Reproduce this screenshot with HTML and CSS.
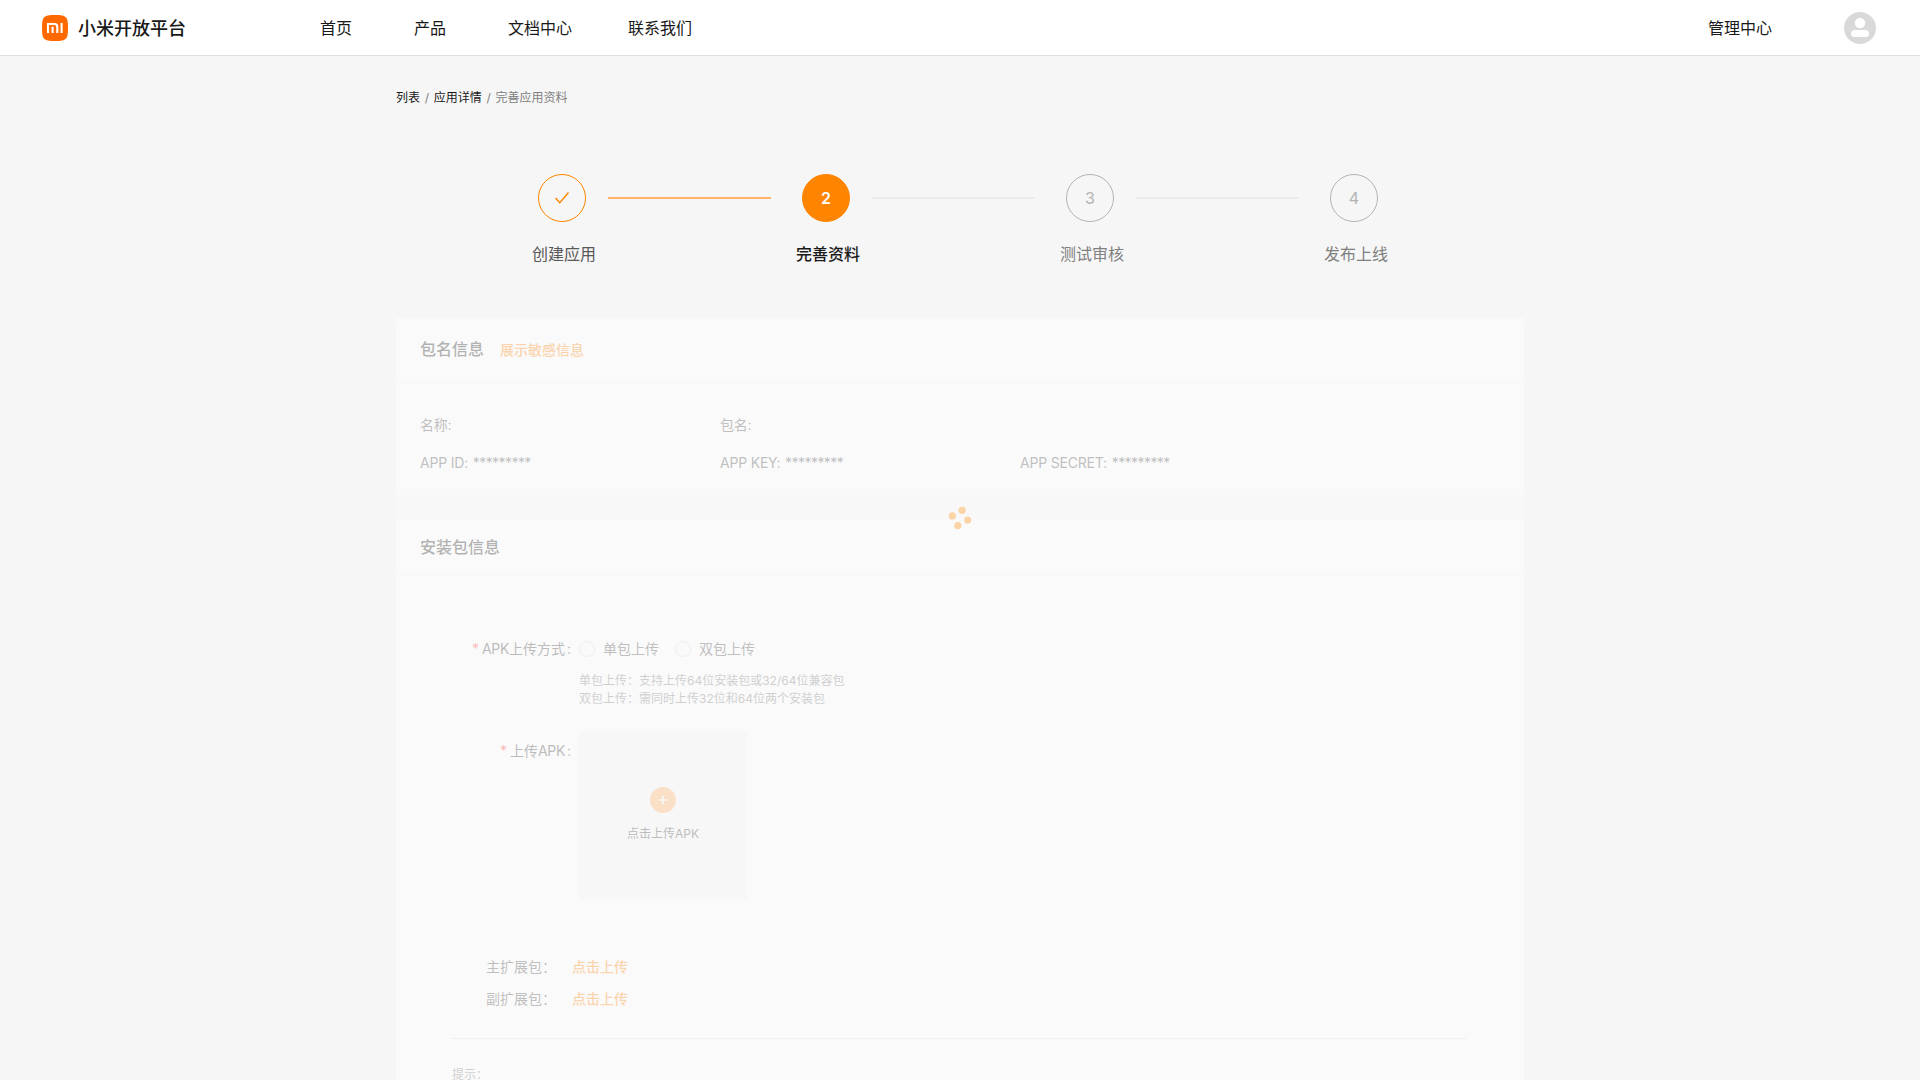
FILE: index.html
```html
<!DOCTYPE html>
<html lang="zh-CN">
<head>
<meta charset="utf-8">
<title>小米开放平台</title>
<link rel="stylesheet" href="styles.css">
</head>
<body>
<header class="header">
  <a class="brand">
    <svg class="brand-logo" viewBox="0 0 26 26"><path fill="#ff6900" d="M13 0C19 0 22 .6 23.8 2.3 25.500 4 26 7 26 13s-.5 9-2.200 10.700C22 25.400 19 26 13 26S4 25.400 2.200 23.700C.5 22 0 19 0 13S.5 4 2.200 2.300C4 .6 7 0 13 0z"/><path fill="none" stroke="#fff" stroke-width="2.100" d="M6 18V9h6.500c1.900 0 2.800.9 2.800 2.800V18M10.600 11.800V18M19.600 8v10"/></svg>
    <span class="brand-name">小米开放平台</span>
  </a>
  <nav class="nav"><a>首页</a><a>产品</a><a>文档中心</a><a>联系我们</a></nav>
  <a class="console">管理中心</a>
  <svg class="avatar" viewBox="0 0 32 32"><circle cx="16" cy="16" r="16" fill="#d9d9d9"/><circle cx="16" cy="11" r="5.200" fill="#fff"/><rect x="7" y="18" width="18" height="7" rx="3.500" fill="#fff"/></svg>
</header>
<main class="page">
  <div class="breadcrumb"><a>列表</a><i>/</i><a>应用详情</a><i>/</i><span>完善应用资料</span></div>
  <div class="steps">
    <div class="step done"><div class="dot"><svg width="16" height="14" viewBox="0 0 16 14"><path d="M1.500 7l4.300 4.800L14.500 1.500" fill="none" stroke="#ff8400" stroke-width="1.400"/></svg></div><div class="label">创建应用</div></div>
    <div class="line active"></div>
    <div class="step current"><div class="dot">2</div><div class="label">完善资料</div></div>
    <div class="line"></div>
    <div class="step"><div class="dot">3</div><div class="label">测试审核</div></div>
    <div class="line"></div>
    <div class="step"><div class="dot">4</div><div class="label">发布上线</div></div>
  </div>
  <div class="loading">
    <div class="content">
      <section class="card package">
        <div class="card-head"><h2>包名信息</h2><a class="link">展示敏感信息</a></div>
        <div class="info"><span>名称:</span><span>包名:</span><span></span><span>APP ID: <b>*********</b></span><span>APP KEY: <b>*********</b></span><span>APP SECRET: <b>*********</b></span></div>
      </section>
      <section class="card install">
        <div class="card-head"><h2>安装包信息</h2></div>
        <div class="field">
          <div class="field-label"><em>*</em><span class="latin">APK</span>上传方式<u>:</u></div>
          <div class="radios"><label><span class="radio"></span>单包上传</label><label><span class="radio"></span>双包上传</label></div>
        </div>
        <div class="help">单包上传：支持上传64位安装包或32/64位兼容包<br>双包上传：需同时上传32位和64位两个安装包</div>
        <div class="field upload-field">
          <div class="field-label"><em>*</em>上传<span class="latin">APK</span><u>:</u></div>
          <div class="upload"><svg width="26" height="26" viewBox="0 0 26 26"><circle cx="13" cy="13" r="13" fill="#ff8400" fill-opacity=".65"/><path d="M13 9v8M9 13h8" stroke="#fff" stroke-width="1.600"/></svg><span>点击上传APK</span></div>
        </div>
        <div class="extras"><div><span>主扩展包：</span><a class="link">点击上传</a></div><div><span>副扩展包：</span><a class="link">点击上传</a></div></div>
        <div class="tips">提示：</div>
      </section>
    </div>
    <svg class="spinner" viewBox="0 0 24 24" fill="#fbd4a6"><circle cx="14.100" cy="4.300" r="3.600"/><circle cx="4.300" cy="9.900" r="3.600"/><circle cx="19.700" cy="14.100" r="3.600"/><circle cx="9.900" cy="19.700" r="3.600"/></svg>
  </div>
</main>
</body>
</html>
```
FILE: styles.css
```css
* { box-sizing: border-box; }
body { margin: 0; height: 1080px; overflow: hidden; background: #f6f6f6; color: #333; font: 14px/22px Inter, "Noto Sans CJK SC", sans-serif; }
.header { height: 56px; background: #fff; border-bottom: 1px solid #e0e0e0; display: flex; align-items: center; color: #191919; font-size: 16px; padding: 0 44px 0 42px; }
.brand { display: flex; align-items: center; width: 278px; }
.brand-logo { width: 26px; height: 26px; margin-right: 10px; }
.brand-name { font-size: 18px; font-weight: 500; padding-top: 2px; }
.nav { display: flex; flex: 1; }
.nav a { margin-right: 56px; }
.nav a:nth-child(2) { margin-left: 6px; margin-right: 62px; }
.console { margin-right: 72px; }
.avatar { width: 32px; height: 32px; }
.page { width: 1128px; margin: 0 auto; padding-top: 31px; }
.breadcrumb { font-size: 12px; color: #808080; height: 22px; }
.breadcrumb a { color: #191919; }
.breadcrumb i { font-style: normal; margin: 0 4.700px; }
.steps { display: flex; padding: 65px 132px 0 134px; height: 209px; }
.step { width: 66px; text-align: center; flex: none; }
.dot { width: 48px; height: 48px; border: 1px solid #b3b3b3; border-radius: 50%; color: #b3b3b3; font-size: 16px; margin: 0 auto 20px 8px; display: flex; align-items: center; justify-content: center; }
.label { font-size: 16px; color: #808080; line-height: 24px; white-space: nowrap; padding-left: 2px; }
.done .dot { border-color: #ff8400; }
.done .label { color: #595959; }
.current .dot { background: #ff8400; border-color: #ff8400; color: #fff; font-weight: 600; }
.current .label { color: #1a1a1a; font-weight: 500; }
.line { width: 163px; height: 2px; margin: 23px 23px 0 12px; background: #ececec; flex: none; }
.line.active { background: #ffb566; }
.loading { position: relative; background: #f8f8f8; }
.content { opacity: .3; }
.card { background: #fff; }
.package { height: 177px; margin-bottom: 24px; border-radius: 4px 4px 0 0; }
.install { height: 561px; }
.card-head { display: flex; align-items: center; padding: 0 24px; border-bottom: 1px solid #f6f6f6; }
.package .card-head { height: 65px; padding-bottom: 2px; }
.install .card-head { height: 57px; }
.card-head h2 { font-size: 16px; font-weight: 500; margin: 0 16px 0 0; color: #111; }
.link { color: #ff8400; font-weight: 500; }
.card-head .link { padding-top: 1px; }
.info { display: grid; grid-template-columns: 300px 300px 300px; row-gap: 16px; padding: 31px 24px 0; color: #404040; }
.info span { letter-spacing: -.2px; }
.info b { font-weight: 400; margin-left: 1px; letter-spacing: -.56px; }
.field { display: flex; }
.install > .field { padding-top: 62px; }
.field-label { width: 183px; text-align: right; padding-right: 8px; flex: none; }
.field-label em { color: #ff2d2d; font-style: normal; margin-right: 3px; }
.field-label u { text-decoration: none; margin-left: 2px; }
.latin { letter-spacing: -.35px; }
.radios { display: flex; gap: 16px; color: #404040; }
.radios label { display: flex; align-items: center; }
.radio { width: 16px; height: 16px; border: 1px solid #d9d9d9; border-radius: 50%; margin-right: 8px; }
.help { padding: 12px 0 0 183px; font-size: 12px; line-height: 18px; color: #737373; }
.install > .upload-field { padding-top: 23px; }
.upload-field .field-label { padding-top: 9px; }
.upload { width: 168px; height: 168px; background: #f7f7f7; display: flex; flex-direction: column; align-items: center; padding-top: 56px; font-size: 12px; }
.upload span { margin-top: 10px; }
.extras { padding: 52px 0 23px 90px; color: #404040; }
.extras div { display: flex; height: 32px; align-items: center; }
.extras span { width: 86px; }
.tips { margin: 0 58px 0 56px; border-top: 1px solid #ddd; padding-top: 25px; font-size: 12px; color: #737373; }
.spinner { position: absolute; left: 552px; top: 188px; width: 24px; height: 24px; }
```
